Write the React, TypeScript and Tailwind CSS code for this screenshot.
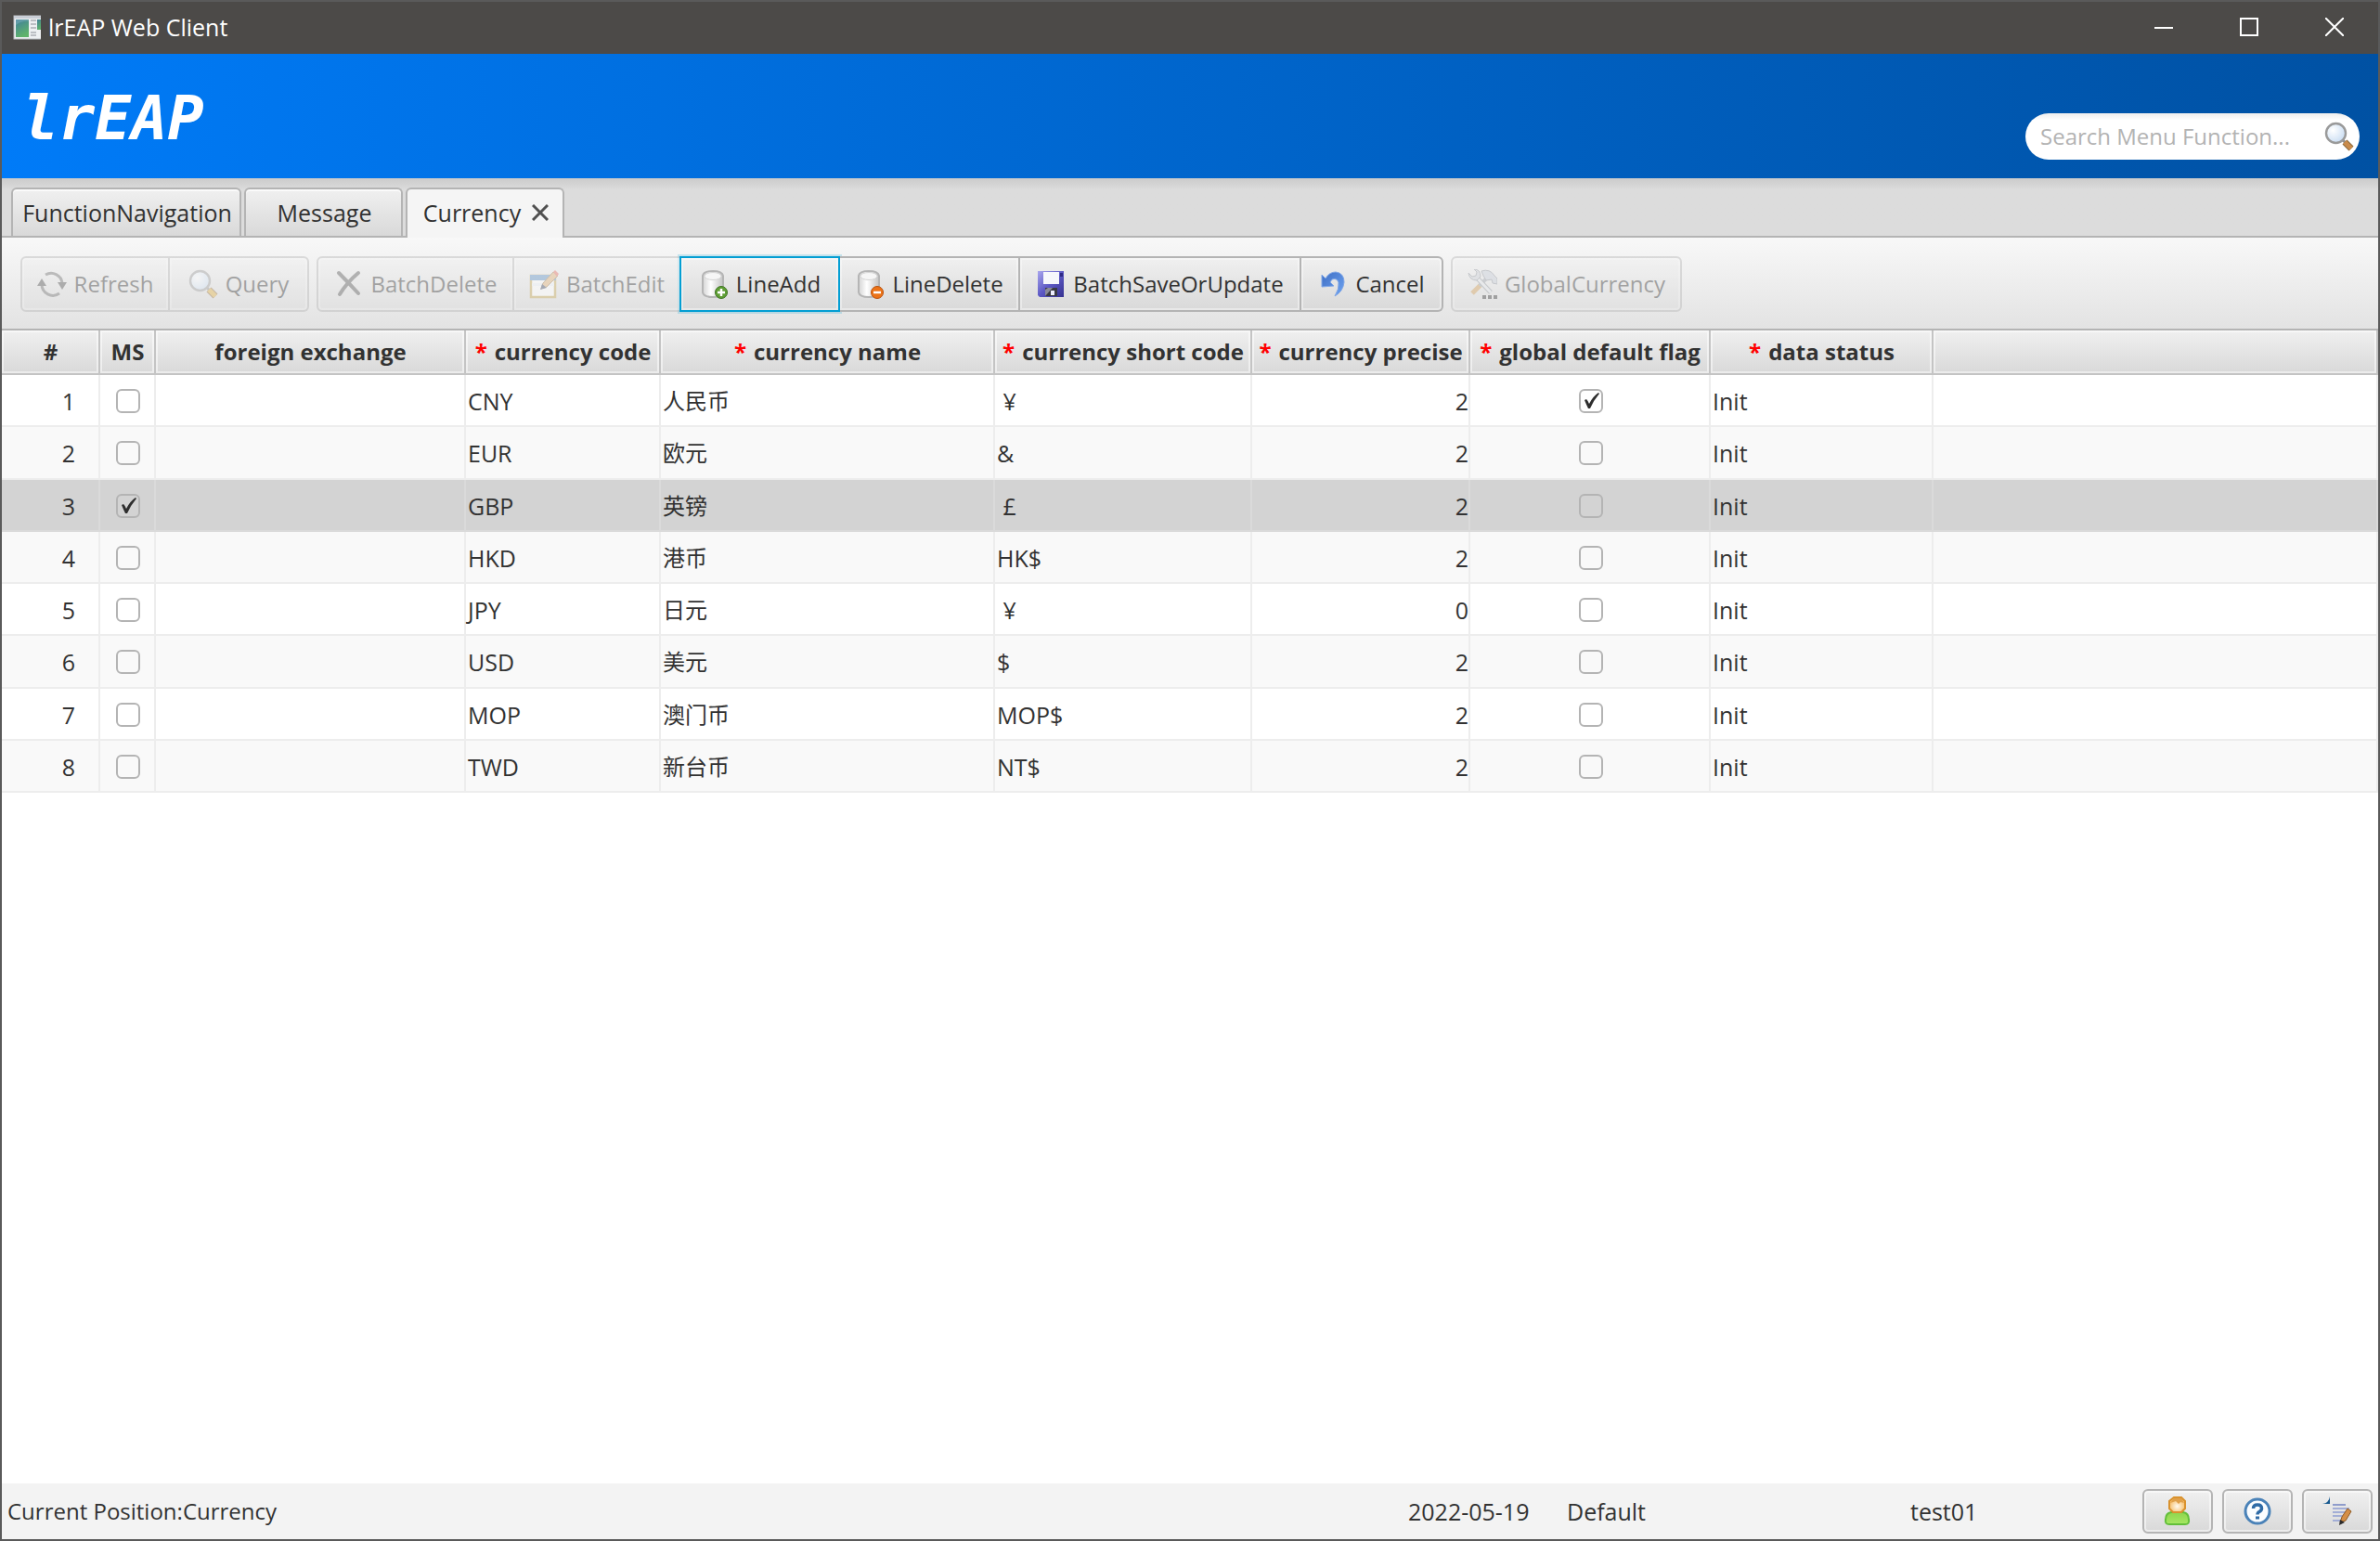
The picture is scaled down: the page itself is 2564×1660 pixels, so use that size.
import React, { useState } from 'react';
import clsx from 'clsx';

interface CurrencyRecord {
  id: number;
  code: string;
  name: string;
  shortCode: string;
  precise: number;
  isDefault: boolean;
  status: string;
}

interface ColumnDef {
  key: string;
  label: string;
  required?: boolean;
  width: string;
}

const COLUMNS: ColumnDef[] = [
  { key: 'index', label: '#', width: 'w-[106px]' },
  { key: 'ms', label: 'MS', width: 'w-[60px]' },
  { key: 'exchange', label: 'foreign exchange', width: 'w-[334px]' },
  { key: 'code', label: 'currency code', required: true, width: 'w-[210px]' },
  { key: 'name', label: 'currency name', required: true, width: 'w-[360px]' },
  { key: 'shortCode', label: 'currency short code', required: true, width: 'w-[277px]' },
  { key: 'precise', label: 'currency precise', required: true, width: 'w-[235px]' },
  { key: 'isDefault', label: 'global default flag', required: true, width: 'w-[259px]' },
  { key: 'status', label: 'data status', required: true, width: 'w-[240px]' },
];

const RECORDS: CurrencyRecord[] = [
  { id: 1, code: 'CNY', name: '人民币', shortCode: ' ¥', precise: 2, isDefault: true, status: 'Init' },
  { id: 2, code: 'EUR', name: '欧元', shortCode: '&', precise: 2, isDefault: false, status: 'Init' },
  { id: 3, code: 'GBP', name: '英镑', shortCode: ' £', precise: 2, isDefault: false, status: 'Init' },
  { id: 4, code: 'HKD', name: '港币', shortCode: 'HK$', precise: 2, isDefault: false, status: 'Init' },
  { id: 5, code: 'JPY', name: '日元', shortCode: ' ¥', precise: 0, isDefault: false, status: 'Init' },
  { id: 6, code: 'USD', name: '美元', shortCode: '$', precise: 2, isDefault: false, status: 'Init' },
  { id: 7, code: 'MOP', name: '澳门币', shortCode: 'MOP$', precise: 2, isDefault: false, status: 'Init' },
  { id: 8, code: 'TWD', name: '新台币', shortCode: 'NT$', precise: 2, isDefault: false, status: 'Init' },
];

/* ---------- Icons ---------- */

const AppIcon = () => (
  <svg viewBox="0 0 32 28" className="h-7 w-8" aria-hidden="true">
    <defs>
      <linearGradient id="appScreen" x1="0" y1="0" x2="0.4" y2="1">
        <stop offset="0" stopColor="#3f7f9c" />
        <stop offset="1" stopColor="#5fb36b" />
      </linearGradient>
    </defs>
    <rect x="3" y="2" width="30" height="25" fill="#eef0f2" stroke="#b9bcc0" />
    <rect x="3" y="2" width="30" height="3" fill="#c9ced6" />
    <rect x="5" y="6" width="14" height="19" fill="url(#appScreen)" />
    <path d="M5 12Q12 7 19 8V6H5Z" fill="#7fb0bd" opacity=".5" />
    <path d="M21 7h6M21 11h6M21 15h6M21 20h6M21 23h6" stroke="#bcbfc4" strokeWidth="2" />
    <rect x="28" y="6" width="4" height="11" fill="url(#appScreen)" />
  </svg>
);

const SearchIcon = ({ handle = '#c98b4b' }: { handle?: string }) => (
  <svg viewBox="0 0 32 32" className="h-8 w-8" aria-hidden="true">
    <defs>
      <radialGradient id="lens" cx="0.35" cy="0.35" r="0.7">
        <stop offset="0" stopColor="#ffffff" />
        <stop offset="1" stopColor="#c9ddf3" />
      </radialGradient>
    </defs>
    <path d="M20 20l3 3" stroke="#8f8f8f" strokeWidth="3" />
    <path d="M22 22l7 7" stroke="#8d6a3c" strokeWidth="7" />
    <path d="M22 22l7 7" stroke={handle} strokeWidth="5" />
    <circle cx="12.500" cy="12.500" r="10.500" fill="url(#lens)" stroke="#9a9a9a" strokeWidth="2.400" />
  </svg>
);

const RefreshIcon = () => (
  <svg viewBox="0 0 32 32" className="h-8 w-8" fill="none" aria-hidden="true">
    <path d="M9 6A12 12 0 0 1 27 15" stroke="#6d6d6d" strokeWidth="3" />
    <path d="M24 26A12 12 0 0 1 5 16" stroke="#6d6d6d" strokeWidth="3" />
    <path d="M22 14h10l-5 8Z" fill="#4c4c4c" />
    <path d="M0 18h10l-5-8Z" fill="#4c4c4c" />
  </svg>
);

const DeleteIcon = () => (
  <svg viewBox="0 0 32 32" className="h-8 w-8" fill="none" strokeLinecap="round" aria-hidden="true">
    <path d="M6 4Q16 14 27 26" stroke="#555" strokeWidth="4" />
    <path d="M27 4Q15 14 7 27" stroke="#555" strokeWidth="4" />
  </svg>
);

const EditIcon = () => (
  <svg viewBox="0 0 32 32" className="h-8 w-8" aria-hidden="true">
    <rect x="2" y="7" width="26" height="23" fill="#fff" stroke="#c3a552" strokeWidth="2.500" />
    <rect x="1" y="6" width="28" height="6" fill="#5b8fc4" />
    <path d="M3 15h24v3H3z" fill="#eef4fa" />
    <path d="M13 21l2-6L26 3l5 4L19 19Z" fill="#dfae72" stroke="#9c7a4a" />
    <path d="M26 3l2-2 4 4-2 3Z" fill="#e26a5c" />
    <path d="M12 22l2-6 5 4Z" fill="#3c4660" />
  </svg>
);

const Cylinder = () => (
  <>
    <defs>
      <linearGradient id="cylinder" x1="0" y1="0" x2="1" y2="0">
        <stop offset="0" stopColor="#d4d4d4" />
        <stop offset=".4" stopColor="#ffffff" />
        <stop offset="1" stopColor="#c4c4c4" />
      </linearGradient>
    </defs>
    <path d="M4 7V25Q5 30 15 30T26 25V7Q25 2 15 2T4 7Z" fill="url(#cylinder)" stroke="#b5b5b5" strokeWidth="2" />
    <ellipse cx="15" cy="7.500" rx="9" ry="4" fill="#f6f6f6" stroke="#d5d5d5" />
  </>
);

const LineAddIcon = () => (
  <svg viewBox="0 0 32 32" className="h-8 w-8" aria-hidden="true">
    <Cylinder />
    <circle cx="24" cy="25" r="6.500" fill="#5f9e35" stroke="#3c7420" />
    <path d="M24 21v8M20 25h8" stroke="#fff" strokeWidth="2.500" />
  </svg>
);

const LineDeleteIcon = () => (
  <svg viewBox="0 0 32 32" className="h-8 w-8" aria-hidden="true">
    <Cylinder />
    <circle cx="24" cy="25" r="6.500" fill="#ec7318" stroke="#b9500c" />
    <path d="M20 25h8" stroke="#fff" strokeWidth="2.500" />
  </svg>
);

const SaveIcon = () => (
  <svg viewBox="0 0 32 32" className="h-8 w-8" aria-hidden="true">
    <defs>
      <linearGradient id="floppy" x1="0" y1="0" x2="1" y2="1">
        <stop offset="0" stopColor="#a9a6ee" />
        <stop offset=".5" stopColor="#5c58c4" />
        <stop offset="1" stopColor="#35318f" />
      </linearGradient>
    </defs>
    <path d="M2 2H30V30H4L2 28Z" fill="url(#floppy)" />
    <rect x="8" y="3" width="17" height="13" fill="#f6f7fc" />
    <rect x="26" y="4" width="3" height="4" fill="#2e2a86" />
    <rect x="10" y="20" width="13" height="9" fill="#3a3a44" />
    <path d="M10 29L18 20H13L10 22Z" fill="#8a8a98" />
    <rect x="16" y="23" width="4" height="5" fill="#eef" />
  </svg>
);

const CancelIcon = () => (
  <svg viewBox="0 0 32 32" className="h-8 w-8" aria-hidden="true">
    <defs>
      <linearGradient id="undo" x1="0" y1="0" x2="1" y2="1">
        <stop offset="0" stopColor="#3f6fc4" />
        <stop offset="1" stopColor="#6fa4f2" />
      </linearGradient>
    </defs>
    <path
      d="M4 6L8 10Q12 3 19 3Q28 4 28 14Q27 24 18 29Q23 21 22 14Q20 9 15 11L13 14L17 18L4 19Z"
      fill="url(#undo)"
      stroke="#7fa6e6"
    />
  </svg>
);

const ToolsIcon = () => (
  <svg viewBox="0 0 32 32" className="h-8 w-8" fill="none" aria-hidden="true">
    <path d="M5 26L14 17" stroke="#cf9a52" strokeWidth="5" />
    <path d="M13 18L22 8" stroke="#9aa0a8" strokeWidth="4" />
    <path d="M9 8L25 25" stroke="#8d9299" strokeWidth="5" />
    <path d="M9 8L25 25" stroke="#e2e5ea" strokeWidth="3" />
    <path d="M1 4l4 4 4-1 1-4-3-3q7 0 7 8l-4 4q-8 0-9-8Z" fill="#c9cdd4" stroke="#8d9299" />
    <path d="M15 2q9-3 14 5l3 3v6l-5-1-1-4-6 1-3-5Z" fill="#c3c9d4" stroke="#8a8f98" />
    <path d="M16 28h4v4h-4zM22 28h4v4h-4zM28 28h4v4h-4z" fill="#333" />
  </svg>
);

const UserIcon = () => (
  <svg viewBox="0 0 32 32" className="h-8 w-8" aria-hidden="true">
    <defs>
      <radialGradient id="face" cx="0.5" cy="0.6" r="0.6">
        <stop offset="0" stopColor="#fffaf0" />
        <stop offset="1" stopColor="#f5b453" />
      </radialGradient>
      <linearGradient id="body" x1="0" y1="0" x2="0" y2="1">
        <stop offset="0" stopColor="#8fd44e" />
        <stop offset="1" stopColor="#a6e863" />
      </linearGradient>
    </defs>
    <path d="M9 17H22Q28 18 28 25Q29 30 24 30H7Q2 30 3 25Q3 18 9 17Z" fill="url(#body)" stroke="#62bf3a" strokeWidth="2" />
    <path d="M12 1H20L24 5V13L20 17H11L7 13V5Z" fill="url(#face)" stroke="#d9922e" strokeWidth="2" />
    <path d="M8 7L12 2H20L23 7L19 6L17 8L14 5Z" fill="#e0a04a" />
  </svg>
);

const HelpIcon = () => (
  <svg viewBox="0 0 32 32" className="h-8 w-8" fill="none" aria-hidden="true">
    <circle cx="16" cy="16" r="13" fill="#fbfdff" stroke="#4a82b8" strokeWidth="3" />
    <path d="M11.500 13Q11.500 9 16 9T20.500 13Q20.500 15 18 16.500Q16 17.500 16 19.500" stroke="#2f6ba6" strokeWidth="3.500" />
    <path d="M14 21.500h4v3h-4z" fill="#2f6ba6" />
  </svg>
);

const NoteIcon = () => (
  <svg viewBox="0 0 32 32" className="h-8 w-8" fill="none" aria-hidden="true">
    <path d="M0 8Q7 7 8 0V8Z" fill="#17598f" />
    <path d="M11 9h14" stroke="#8f9ccb" strokeWidth="2" />
    <path d="M11 13h18M11 17h18M11 21h11M11 26h8" stroke="#a3aed6" strokeWidth="2" />
    <path d="M19 28l2-6 6-9 4 3-6 10Z" fill="#d58f47" stroke="#8f5a24" />
    <path d="M18 31l1-6 5 3Z" fill="#2b2b2b" />
  </svg>
);

/* ---------- Building blocks ---------- */

interface ToolButtonProps {
  label: string;
  icon: React.ReactNode;
  disabled?: boolean;
  className?: string;
}

function ToolButton({ label, icon, disabled, className }: ToolButtonProps) {
  return (
    <button
      type="button"
      disabled={disabled}
      className={clsx(
        'flex h-15 items-center justify-center gap-2 whitespace-nowrap border-[#b4b4b4] bg-linear-to-b from-[#f0f0f0] to-[#d9d9d9] inset-shadow-[0_0_0_2px_rgba(255,255,255,0.4)]',
        disabled && 'opacity-40',
        className
      )}
    >
      {icon}
      <span>{label}</span>
    </button>
  );
}

interface CheckBoxProps {
  label: string;
  checked: boolean;
  onChange: () => void;
}

function CheckBox({ label, checked, onChange }: CheckBoxProps) {
  return (
    <span className="relative mx-auto block size-[26px]">
      <input
        type="checkbox"
        aria-label={label}
        checked={checked}
        onChange={onChange}
        className="block size-[26px] appearance-none rounded-md border-2 border-[#b4b4b4]"
      />
      {checked && (
        <svg viewBox="0 0 26 26" className="pointer-events-none absolute inset-0 size-[26px]" aria-hidden="true">
          <path d="M6 12L8 11Q10 13 11 16Q15 8 21 4L22 5Q16 12 12 21H10Q8 17 6 12Z" fill="#2e2e2e" />
        </svg>
      )}
    </span>
  );
}

function TitleBar() {
  const controlClass = 'flex h-full w-23 items-center justify-center';
  return (
    <div className="flex h-14 items-center bg-[#4c4a48] pr-px pb-[2px] pl-[10px] text-white">
      <AppIcon />
      <span className="ml-2 flex-1">lrEAP Web Client</span>
      <button type="button" aria-label="Minimize" className={controlClass}>
        <svg viewBox="0 0 20 20" className="size-5" stroke="#fff" strokeWidth="2">
          <path d="M0 11h20" />
        </svg>
      </button>
      <button type="button" aria-label="Maximize" className={controlClass}>
        <svg viewBox="0 0 20 20" className="size-5" stroke="#fff" strokeWidth="2" fill="none">
          <rect x="1" y="1" width="18" height="18" />
        </svg>
      </button>
      <button type="button" aria-label="Close" className={controlClass}>
        <svg viewBox="0 0 20 20" className="size-5" stroke="#fff" strokeWidth="2">
          <path d="M0 0l20 20M20 0L0 20" />
        </svg>
      </button>
    </div>
  );
}

function Banner() {
  return (
    <header className="flex h-[134px] items-end justify-between bg-linear-to-r from-[#007bf8] to-[#0051a3] pr-5 pb-5 pl-[22px]">
      <h1 className="mb-3 font-['DejaVu_Sans_Mono',monospace] text-[65px] leading-[64px] font-bold text-white italic">lrEAP</h1>
      <div className="flex h-[50px] w-[360px] items-center rounded-full bg-white bg-linear-to-b from-[#ececec] from-0% to-white to-15% pr-[6px] pl-4">
        <input
          type="text"
          aria-label="Search menu function"
          placeholder="Search Menu Function..."
          className="min-w-0 flex-1 bg-transparent text-[24px] outline-none placeholder:text-[#b3b3b3]"
        />
        <button type="button" aria-label="Search">
          <SearchIcon />
        </button>
      </div>
    </header>
  );
}

function TabStrip() {
  const tabClass = 'flex h-[52px] items-center justify-center rounded-t-md border-2 border-b-0 border-[#b4b4b4] pl-[2px]';
  const idleClass = 'bg-linear-to-b from-[#f0f0f0] to-[#d9d9d9] inset-shadow-[0_2px_0_0_rgba(255,255,255,0.7)]';
  return (
    <nav className="flex h-16 items-end gap-[3px] border-b-2 border-[#b4b4b4] bg-[#dcdcdc] bg-linear-to-b from-[#cbcbcb] from-0% to-[#dcdcdc] to-20% pl-[10px]">
      <button type="button" className={clsx(tabClass, idleClass, 'w-[248px]')}>FunctionNavigation</button>
      <button type="button" className={clsx(tabClass, idleClass, 'w-[171px]')}>Message</button>
      <div className={clsx(tabClass, '-mb-[2px] h-[54px] w-[171px] gap-3 bg-[#f5f5f5] pb-[2px]')}>
        <button type="button">Currency</button>
        <button type="button" aria-label="Close tab">
          <svg viewBox="0 0 18 18" className="size-[18px]" stroke="#505050" strokeWidth="3">
            <path d="M1 1l16 16M17 1L1 17" />
          </svg>
        </button>
      </div>
    </nav>
  );
}

function Toolbar() {
  return (
    <div className="flex h-25 items-end gap-2 border-b-2 border-[#b4b4b4] bg-linear-to-b from-[#f8f8f8] to-[#e3e3e3] pb-[18px] pl-5 text-[24px]">
      <div className="flex">
        <ToolButton label="Refresh" icon={<RefreshIcon />} disabled className="w-[161px] rounded-l-md border-2" />
        <ToolButton label="Query" icon={<SearchIcon handle="#e0b040" />} disabled className="w-[150px] rounded-r-md border-2 border-l-0" />
      </div>
      <div className="flex">
        <ToolButton label="BatchDelete" icon={<DeleteIcon />} disabled className="w-[213px] rounded-l-md border-2" />
        <ToolButton label="BatchEdit" icon={<EditIcon />} disabled className="w-[178px] border-y-2" />
        <ToolButton
          label="LineAdd"
          icon={<LineAddIcon />}
          className="w-[173px] border-2 !border-[#039ed3] ring-2 ring-[#039ed3]/20"
        />
        <ToolButton label="LineDelete" icon={<LineDeleteIcon />} className="w-[194px] border-y-2 border-r-2" />
        <ToolButton label="BatchSaveOrUpdate" icon={<SaveIcon />} className="w-[303px] border-y-2 border-r-2" />
        <ToolButton label="Cancel" icon={<CancelIcon />} className="w-[153px] rounded-r-md border-y-2 border-r-2" />
      </div>
      <ToolButton label="GlobalCurrency" icon={<ToolsIcon />} disabled className="w-[249px] rounded-md border-2" />
    </div>
  );
}

function CurrencyTable() {
  const [selected, setSelected] = useState<number[]>([3]);
  const [defaults, setDefaults] = useState<number[]>(RECORDS.filter(r => r.isDefault).map(r => r.id));

  const toggle = (ids: number[], id: number) => (ids.includes(id) ? ids.filter(i => i !== id) : [...ids, id]);

  const thClass = 'h-12 border-r-2 border-b-2 border-[#c4c4c4] bg-linear-to-b from-[#f0f0f0] to-[#d9d9d9] p-0 pl-px text-[24px] inset-shadow-[0_0_0_2px_rgba(255,255,255,0.5)]';

  return (
    <table className="h-[498px] w-full table-fixed border-separate border-spacing-0">
      <colgroup>
        {COLUMNS.map(col => (
          <col key={col.key} className={col.width} />
        ))}
        <col />
      </colgroup>
      <thead>
        <tr>
          {COLUMNS.map(col => (
            <th key={col.key} className={thClass}>
              <div className="flex items-center justify-center gap-2 whitespace-nowrap">
                {col.required && <span className="text-[#ff0000]">*</span>}
                <span>{col.label}</span>
              </div>
            </th>
          ))}
          <th className={clsx(thClass, 'border-r-0')} />
        </tr>
      </thead>
      <tbody>
        {RECORDS.map(record => {
          const isSelected = selected.includes(record.id);
          const tdClass = clsx(
            'h-14 border-r-2 border-b-2 p-0 pt-[2px] pl-[2px] whitespace-pre',
            isSelected ? 'border-[#dadada]' : 'border-[#ededed]'
          );
          return (
            <tr key={record.id} className={isSelected ? 'bg-[#d3d3d3]' : 'bg-white even:bg-[#f9f9f9]'}>
              <td className={clsx(tdClass, 'pr-[25px] text-right')}>{record.id}</td>
              <td className={tdClass}>
                <CheckBox
                  label={`Select ${record.code}`}
                  checked={isSelected}
                  onChange={() => setSelected(toggle(selected, record.id))}
                />
              </td>
              <td className={tdClass} />
              <td className={tdClass}>{record.code}</td>
              <td className={clsx(tdClass, 'text-[24px]')}>{record.name}</td>
              <td className={tdClass}>{record.shortCode}</td>
              <td className={clsx(tdClass, 'text-right')}>{record.precise}</td>
              <td className={tdClass}>
                <CheckBox
                  label={`${record.code} is global default`}
                  checked={defaults.includes(record.id)}
                  onChange={() => setDefaults(toggle(defaults, record.id))}
                />
              </td>
              <td className={tdClass}>{record.status}</td>
              <td className={clsx(tdClass, 'border-r-0')} />
            </tr>
          );
        })}
      </tbody>
    </table>
  );
}

function StatusBar() {
  const buttonClass = 'flex h-12 w-19 items-center justify-center rounded-md border-2 border-[#b4b4b4] bg-linear-to-b from-[#f0f0f0] to-[#d9d9d9] inset-shadow-[0_0_0_2px_rgba(255,255,255,0.5)]';
  return (
    <footer className="flex h-15 items-center bg-[#f3f3f3] pr-[6px] pl-[6px]">
      <span className="flex-1 text-[24px]">Current Position:Currency</span>
      <span className="w-[171px]">2022-05-19</span>
      <span className="w-[370px]">Default</span>
      <span className="w-[250px]">test01</span>
      <div className="flex gap-[10px]">
        <button type="button" aria-label="User" className={buttonClass}><UserIcon /></button>
        <button type="button" aria-label="Help" className={buttonClass}><HelpIcon /></button>
        <button type="button" aria-label="Notes" className={buttonClass}><NoteIcon /></button>
      </div>
    </footer>
  );
}

export default function App() {
  return (
    <div className="flex min-h-screen flex-col border-2 border-[#5a5a5a] bg-white font-['Open_Sans','Noto_Sans_CJK_SC',sans-serif] text-[25px] leading-8 text-[#323232]">
      <TitleBar />
      <Banner />
      <TabStrip />
      <Toolbar />
      <main className="flex-1">
        <CurrencyTable />
      </main>
      <StatusBar />
    </div>
  );
}
